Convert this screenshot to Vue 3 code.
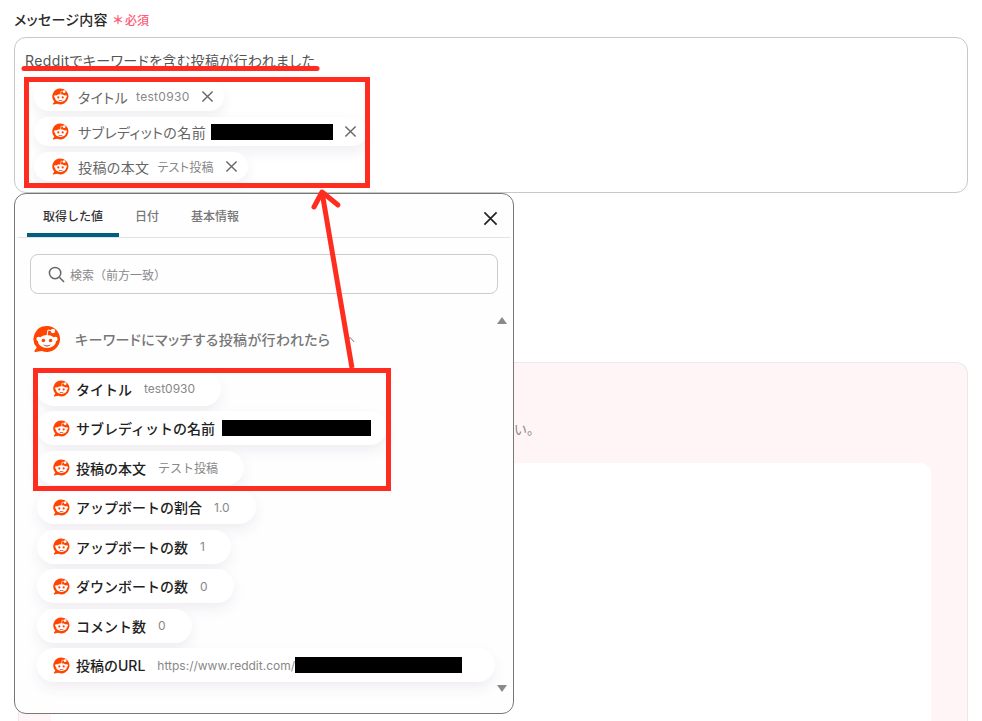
<script setup>
const fieldChips = [
  { label: 'タイトル', value: 'test0930' },
  { label: 'サブレディットの名前', redact: 122 },
  { label: '投稿の本文', value: 'テスト投稿' }
]
const outputs = [
  { label: 'タイトル', value: 'test0930' },
  { label: 'サブレディットの名前', redact: 149 },
  { label: '投稿の本文', value: 'テスト投稿' },
  { label: 'アップボートの割合', value: '1.0' },
  { label: 'アップボートの数', value: '1' },
  { label: 'ダウンボートの数', value: '0' },
  { label: 'コメント数', value: '0' },
  { label: '投稿のURL', value: 'https://www.reddit.com/', redact: 167 }
]
const tabs = ['取得した値', '日付', '基本情報']
</script>

<template>
  <div class="page">
    <svg width="0" height="0" class="defs">
      <symbol id="reddit" viewBox="0 0 28 28">
        <path d="M14 1a13 13 0 1 1-5.200 24.900L2.400 27c-.9.100-1.300-.7-.8-1.400l2.200-3A13 13 0 0 1 14 1z" fill="#ff4500"/>
        <ellipse cx="14" cy="16.500" rx="9" ry="6.400" fill="#fff"/>
        <circle cx="5.600" cy="14" r="2.200" fill="#fff"/>
        <circle cx="22.400" cy="14" r="2.200" fill="#fff"/>
        <circle cx="10.400" cy="15.500" r="1.800" fill="#ff4500"/>
        <circle cx="17.600" cy="15.500" r="1.800" fill="#ff4500"/>
        <path d="M10.400 19.300c1.900 1.600 5.300 1.600 7.200 0-1 2.800-6.200 2.800-7.200 0z" fill="#7a2b1a"/>
        <path d="M14 10.500l1-5.500 4 .8" fill="none" stroke="#fff" stroke-width="1"/>
        <circle cx="20" cy="6" r="2.200" fill="#fff"/>
      </symbol>
    </svg>

    <div class="label-row">
      <span class="label">メッセージ内容</span>
      <span class="asterisk">＊</span>
      <span class="required">必須</span>
    </div>

    <div class="textarea">
      <p class="message">Redditでキーワードを含む投稿が行われました</p>
      <div class="field-chips">
        <div v-for="c in fieldChips" :key="c.label" class="chip field-chip">
          <svg class="chip-icon"><use href="#reddit" /></svg>
          <span class="field-label">{{ c.label }}</span>
          <span v-if="c.value" class="chip-value">{{ c.value }}</span>
          <span v-if="c.redact" class="redact field-redact" :style="{ width: c.redact + 'px' }"></span>
          <svg class="remove" viewBox="0 0 14 14"><path d="M1.500 1.500l11 11M12.500 1.500l-11 11" /></svg>
        </div>
      </div>
    </div>

    <section class="note-card">
      <p class="note-text">い。</p>
      <div class="note-panel"></div>
    </section>

    <div class="popup">
      <div class="tabs">
        <div v-for="(t, i) in tabs" :key="t" class="tab" :class="{ active: i === 0 }">{{ t }}</div>
        <svg class="close" viewBox="0 0 16 16"><path d="M1.500 1.500l13 13M14.500 1.500l-13 13" /></svg>
      </div>
      <div class="search">
        <svg class="search-icon" viewBox="0 0 18 18"><circle cx="7.500" cy="7.500" r="6" /><path d="M12 12l5 5" /></svg>
        <span>検索（前方一致）</span>
      </div>
      <div class="source">
        <svg class="source-icon"><use href="#reddit" /></svg>
        <span class="source-title">キーワードにマッチする投稿が行われたら</span>
        <svg class="chevron" viewBox="0 0 12 8"><path d="M1 7l5-5.500L11 7" /></svg>
      </div>
      <div class="outputs">
        <div
          v-for="o in outputs"
          :key="o.label"
          class="chip output-chip"
          :class="{ short: o.redact && !o.value, long: o.redact && o.value }"
        >
          <svg class="chip-icon"><use href="#reddit" /></svg>
          <span class="output-label">{{ o.label }}</span>
          <span v-if="o.value" class="output-value">{{ o.value }}</span>
          <span v-if="o.redact" class="redact output-redact" :class="{ tight: o.value }" :style="{ width: o.redact + 'px' }"></span>
        </div>
      </div>
      <span class="scroll up"></span>
      <span class="scroll down"></span>
    </div>

    <svg class="annotations" width="982" height="721" viewBox="0 0 982 721">
      <path d="M24 68.500H317" class="mark round" />
      <rect x="26.500" y="79.500" width="341" height="106" class="mark" />
      <rect x="35.500" y="370.500" width="353" height="118" class="mark" />
      <path d="M352 368L322 192" class="mark" />
      <path d="M314 207L322 192L338 205" class="mark round" />
    </svg>
  </div>
</template>

<style>
html, body { margin: 0; background: #fff; }
</style>

<style scoped>
.page {
  position: relative;
  width: 982px;
  height: 721px;
  overflow: hidden;
  box-sizing: border-box;
  padding: 10px 14px 0;
  background: #fff;
  color: #333;
  font-family: Inter, "Noto Sans CJK JP", sans-serif;
  font-size: 14px;
}
.defs { position: absolute; }
.label-row { display: flex; align-items: center; height: 18px; }
.label { font-size: 14px; font-weight: 500; color: #2a2a2a; font-feature-settings: "palt"; letter-spacing: .3px; }
.asterisk { margin-left: 4px; font-size: 12px; font-weight: 700; color: #ff5a78; }
.required { margin-left: 1px; font-size: 12px; color: #ff5a78; font-weight: 500; }
.textarea {
  box-sizing: border-box;
  height: 156px;
  margin-top: 9px;
  padding: 13px 10px 0;
  border: 1px solid #c8c8c8;
  border-radius: 12px;
}
.message { margin: 0; line-height: 20px; color: #555; font-feature-settings: "palt"; letter-spacing: .4px; }
.field-chips { display: flex; flex-direction: column; align-items: flex-start; gap: 6px; margin-top: 11px; margin-left: 9px; }
.chip {
  display: flex;
  align-items: center;
  box-sizing: border-box;
  background: #fff;
  border-radius: 18px;
  box-shadow: 0 6px 14px rgba(30, 20, 60, .07);
}
.field-chip { height: 29px; padding: 0 10px 0 18px; }
.chip-icon { width: 17px; height: 17px; flex: none; }
.field-label { margin-left: 9px; color: #666; font-feature-settings: "palt"; letter-spacing: .4px; }
.chip-value { margin-left: 8px; font-size: 12px; color: #888; font-feature-settings: "palt"; letter-spacing: .3px; }
.redact { display: block; height: 16px; background: #000; }
.field-redact { margin-left: 5px; }
.remove { width: 13px; height: 13px; margin-left: 11px; }
.remove path { fill: none; stroke: #666; stroke-width: 1.500; }
.note-card {
  box-sizing: border-box;
  height: 400px;
  margin: 169px 0 0 4px;
  padding: 57px 36px 0 32px;
  background: #fff5f6;
  border: 1px solid #e9e8ea;
  border-bottom: 0;
  border-radius: 12px 12px 0 0;
}
.note-text { margin: 0 0 0 463px; font-size: 13px; line-height: 18px; color: #888; }
.note-panel { height: 300px; margin-top: 25px; background: #fff; border-radius: 10px 10px 0 0; }
.popup {
  position: absolute;
  left: 14px;
  top: 193px;
  box-sizing: border-box;
  width: 500px;
  height: 521px;
  background: rgba(255, 254, 255, .97);
  border: 1px solid #777;
  border-radius: 12px;
  display: flex;
  flex-direction: column;
}
.tabs {
  position: relative;
  display: flex;
  height: 43px;
  margin: 0 3px;
  padding-left: 9px;
  border-bottom: 1px solid #e2e2e2;
}
.tab {
  box-sizing: border-box;
  height: 43px;
  padding: 13px 16px 0;
  font-size: 12px;
  font-weight: 500;
  line-height: 20px;
  color: #777;
}
.tab.active { color: #333; border-bottom: 4px solid #005f80; border-radius: 3px 3px 0 0; }
.close { position: absolute; right: 12px; top: 17px; width: 15px; height: 15px; }
.close path { fill: none; stroke: #222; stroke-width: 1.800; }
.search {
  display: flex;
  align-items: center;
  gap: 5px;
  box-sizing: border-box;
  height: 40px;
  margin: 16px 15px 0;
  padding-left: 17px;
  border: 1px solid #ccc;
  border-radius: 8px;
  font-size: 12px;
  color: #888;
}
.search-icon { width: 17px; height: 17px; }
.search-icon circle, .search-icon path { fill: none; stroke: #666; stroke-width: 1.600; }
.source { display: flex; align-items: center; height: 28px; margin: 31px 0 0 18px; }
.source-icon { width: 28px; height: 28px; }
.source-title { margin-left: 14px; font-size: 14px; font-weight: 500; color: #777; font-feature-settings: "palt"; letter-spacing: .4px; }
.chevron { width: 10px; height: 7px; margin-left: 15px; }
.chevron path { fill: none; stroke: #777; stroke-width: 1.200; }
.outputs { display: flex; flex-direction: column; align-items: flex-start; gap: 5.500px; margin: 18.500px 0 0 22px; }
.output-chip { height: 34px; padding: 0 26px 0 16px; }
.output-chip.short { padding-right: 16px; }
.output-chip.long { padding-right: 33px; }
.output-label { margin-left: 6px; font-weight: 500; color: #222; }
.output-value { margin-left: 12px; font-size: 12px; color: #888; }
.output-redact { margin-left: 7px; }
.output-redact.tight { margin-left: 0; }
.scroll { position: absolute; right: 6px; width: 0; height: 0; border-left: 5px solid transparent; border-right: 5px solid transparent; }
.scroll.up { top: 123px; border-bottom: 7px solid #8a8a8a; }
.scroll.down { top: 491px; border-top: 7px solid #8a8a8a; }
.annotations { position: absolute; left: 0; top: 0; pointer-events: none; }
.mark { fill: none; stroke: #ff2d20; stroke-width: 5; }
.round { stroke-linecap: round; stroke-linejoin: round; }
</style>
